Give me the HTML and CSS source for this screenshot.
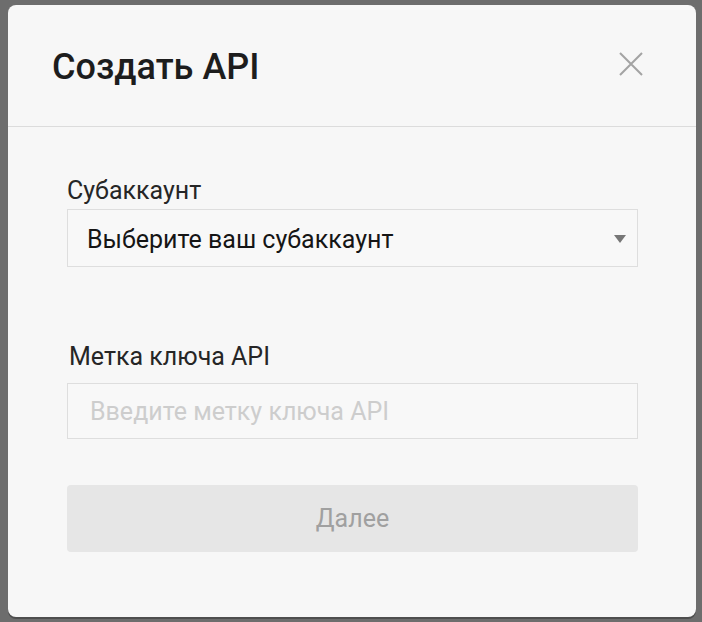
FILE: index.html
```html
<!DOCTYPE html>
<html lang="ru">
<head>
<meta charset="utf-8">
<link rel="stylesheet" href="styles.css">
</head>
<body>
<div class="modal">
  <div class="modal-header">
    <h1 class="title">Создать API</h1>
    <button class="close" aria-label="close">
      <svg width="26" height="26" viewBox="0 0 26 26"><path d="M2 2L24 24M24 2L2 24" stroke="#a3a3a3" stroke-width="2" fill="none"/></svg>
    </button>
  </div>
  <div class="modal-body">
    <div class="field">
      <label class="label">Субаккаунт</label>
      <div class="select">
        <span class="select-text">Выберите ваш субаккаунт</span>
        <span class="caret"></span>
      </div>
    </div>
    <div class="field field-second">
      <label class="label label-second">Метка ключа API</label>
      <div class="input"><span class="placeholder">Введите метку ключа API</span></div>
    </div>
    <button class="next">Далее</button>
  </div>
</div>
</body>
</html>
```

FILE: styles.css
```css
html, body {
  margin: 0;
  padding: 0;
  background: #6d6d6d;
  height: 100%;
}
body {
  font-family: Roboto, "Liberation Sans", sans-serif;
  padding: 5px 6px 5px 8px;
  box-sizing: border-box;
}
.modal {
  width: 688px;
  height: 612px;
  background: #f7f7f7;
  border-radius: 8px;
  box-shadow: 0 2px 0 #4e4e4e;
}
.modal-header {
  height: 122px;
  border-bottom: 1px solid #dcdcdc;
  display: flex;
  align-items: center;
  justify-content: space-between;
  padding: 0 52px 0 44px;
  box-sizing: border-box;
}
.title {
  margin: 0;
  font-size: 36px;
  font-weight: 500;
  color: #1d1d1d;
  padding-top: 3px;
}
.close {
  border: 0;
  background: none;
  padding: 0;
  display: flex;
  margin-bottom: 4px;
}
.modal-body {
  padding: 49px 58px 0 59px;
}
.field {
  display: flex;
  flex-direction: column;
}
.label {
  font-size: 25px;
  color: #262626;
  line-height: 30px;
  margin-bottom: 3px;
}
.label-second {
  padding-left: 2px;
  margin-bottom: 11px;
}
.field-second {
  margin-top: 75px;
}
.select, .input {
  border: 1px solid #dedede;
  box-sizing: border-box;
  background: #f8f8f8;
  display: flex;
  align-items: center;
}
.select {
  height: 58px;
  justify-content: space-between;
  padding: 3px 11px 0 19px;
}
.select-text {
  font-size: 25px;
  color: #151515;
}
.caret {
  width: 0;
  height: 0;
  border-left: 6px solid transparent;
  border-right: 6px solid transparent;
  border-top: 8px solid #777;
  margin-bottom: 2px;
}
.input {
  height: 56px;
  padding-left: 22px;
}
.placeholder {
  font-size: 25px;
  color: #cdcdcd;
}
.next {
  margin-top: 46px;
  width: 100%;
  height: 67px;
  border: 0;
  border-radius: 4px;
  background: #e6e6e6;
  color: #a0a0a0;
  font-family: Roboto, "Liberation Sans", sans-serif;
  font-size: 25px;
  display: block;
}
```
